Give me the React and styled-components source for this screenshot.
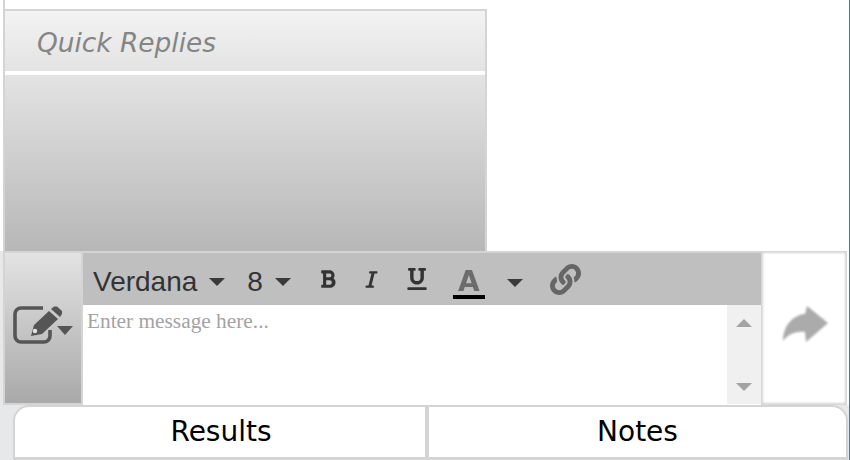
import React from "react";
import styled, { createGlobalStyle } from "styled-components";
import { FaBold, FaItalic, FaLink, FaUnderline } from "react-icons/fa";

const Global = createGlobalStyle`
    html, body {
        margin: 0;
        padding: 0;
        background: #ffffff;
    }
    body {
        font-family: "DejaVu Sans", sans-serif;
    }
`;

const Page = styled.div`
    width: 850px;
    height: 460px;
    overflow: hidden;
    display: flex;
    flex-direction: column;
    box-sizing: border-box;
    background: #ffffff;
    border-right: 1px solid #2f7fc1;
`;

const Top = styled.div`
    height: 251px;
    box-sizing: border-box;
    margin-left: 3px;
    border-left: 2px solid #d4d4d4;
    padding-top: 9px;
`;

const Replies = styled.div`
    width: 482px;
    height: 242px;
    box-sizing: border-box;
    border: 2px solid #d4d4d4;
    border-width: 2px 2px 0 0;
    display: flex;
    flex-direction: column;
`;

const RepliesHeader = styled.div`
    height: 60px;
    box-sizing: border-box;
    padding: 2px 0 0 32px;
    display: flex;
    align-items: center;
    background: linear-gradient(#f3f3f3, #e3e3e3);
    color: #858585;
    font-size: 26.4px;
    font-style: italic;
`;

const RepliesBody = styled.div`
    flex: 1;
    border-top: 4px solid #ffffff;
    background: linear-gradient(#e3e3e3, #b7b7b7);
`;

const Composer = styled.div`
    height: 154px;
    box-sizing: border-box;
    margin-right: 2px;
    border-left: 3px solid #e7e8e9;
    padding: 2px 2px 0;
    display: flex;
    background: #d4d4d4;
`;

const ModeButton = styled.div`
    width: 76px;
    height: 150px;
    box-sizing: border-box;
    margin-right: 2px;
    background: linear-gradient(#e3e3e3, #a9a9a9);
    display: flex;
    align-items: flex-start;
    padding: 53px 0 0 8px;
    color: #555555;
`;

const ModeCaret = styled.span`
    flex: none;
    margin: 20px 0 0 -6px;
    border-left: 8px solid transparent;
    border-right: 8px solid transparent;
    border-top: 9px solid #555555;
    filter: blur(0.4px);
`;

const Caret = styled.span`
    flex: none;
    margin-top: ${props => props.offset || 0}px;
    border-left: 8px solid transparent;
    border-right: 8px solid transparent;
    border-top: 8px solid #3a3a3a;
`;

const Editor = styled.div`
    width: 678px;
    display: flex;
    flex-direction: column;
`;

const Toolbar = styled.div`
    height: 52px;
    background: #bfbfbf;
    display: flex;
    align-items: center;
    padding-left: 10px;
    color: #333333;
    font-family: "Liberation Sans", sans-serif;
    font-size: 28px;
`;

const Picker = styled.div`
    display: flex;
    align-items: center;
    gap: 12px;
    margin-right: ${props => props.gap}px;
    padding-top: 5px;
`;

const Format = styled.span`
    width: 32px;
    display: flex;
    justify-content: center;
    margin-right: ${props => props.gap}px;
    color: #333333;
    filter: blur(0.5px);
`;

const ColorSwatch = styled.div`
    align-self: flex-end;
    width: 32px;
    height: 28px;
    box-sizing: border-box;
    margin: 0 22px 6px 0;
    border-bottom: 4px solid #000000;
    text-align: center;
    color: #6c6c6c;
    font-family: "DejaVu Sans", sans-serif;
    font-size: 28px;
    font-weight: 700;
    line-height: 22px;
`;

const ColorLetter = styled.span`
    filter: blur(0.5px);
`;

const LinkIcon = styled.span`
    display: flex;
    margin-left: 27px;
    color: #666666;
    filter: blur(0.5px);
`;

const MessageArea = styled.div`
    flex: 1;
    display: flex;
    background: #ffffff;
`;

const Message = styled.div`
    flex: 1;
    padding: 4px 4px;
    color: #a3a3a3;
    font-family: "Liberation Serif", serif;
    font-size: 21.33px;
    line-height: 24px;
`;

const Scrollbar = styled.div`
    width: 34px;
    margin-bottom: 1px;
    box-sizing: border-box;
    background: #f0f0f0;
    display: flex;
    flex-direction: column;
    align-items: center;
    justify-content: space-between;
    padding: 14px 0 13px;
`;

const ArrowUp = styled.span`
    border-left: 8px solid transparent;
    border-right: 8px solid transparent;
    border-bottom: 8px solid #a3a3a3;
`;

const ArrowDown = styled.span`
    border-left: 8px solid transparent;
    border-right: 8px solid transparent;
    border-top: 8px solid #a3a3a3;
`;

const SendButton = styled.div`
    width: 82px;
    height: 150px;
    margin-left: 2px;
    box-sizing: border-box;
    padding: 0 0 8px 4px;
    background: #ffffff;
    display: flex;
    align-items: center;
    justify-content: center;
    color: #ababab;
    filter: blur(0.9px);
`;

const Tabs = styled.div`
    height: 55px;
    box-sizing: border-box;
    background: #e7e8e9;
    padding-left: 13px;
    display: flex;
    align-items: flex-start;
`;

const Tab = styled.div`
    width: ${props => props.first ? "414px" : "421px"};
    height: 55px;
    box-sizing: border-box;
    background: #ffffff;
    border: 2px solid #d4d4d4;
    border-bottom-width: 3px;
    border-top-left-radius: ${props => props.first ? "16px" : "0"};
    border-top-right-radius: ${props => props.first ? "0" : "16px"};
    padding: 0 0 2px ${props => props.first ? "2px" : "0"};
    display: flex;
    align-items: center;
    justify-content: center;
    color: #000000;
    font-size: 28px;
`;

const PencilBox = () => (
    <svg width="50" height="38" viewBox="0 0 50 38" style={{ flex: "none", filter: "blur(0.4px)" }}>
        <path d="M30 2H8a6 6 0 0 0-6 6v22a6 6 0 0 0 6 6h23a6 6 0 0 0 6-6V24" fill="none" stroke="currentColor" strokeWidth="3.6" />
        <path d="M18 30l3-11L36 5l9 8-16 15z" fill="currentColor" />
        <path d="M38 3l3-2.5h3l5 4.500v3l-2 3z" fill="currentColor" />
        <circle cx="22" cy="25" r="2.2" fill="#e4e4e4" />
    </svg>
);

const SendArrow = () => (
    <svg width="46" height="36" viewBox="0 0 46 36">
        <path d="M24 0L45 17 23 36 22 26C14 25 5 28 0 35 0 21 9 9 22 8z" fill="currentColor" />
    </svg>
);

export default function App() {
    return (
        <Page>
            <Global />
            <Top>
                <Replies>
                    <RepliesHeader>Quick Replies</RepliesHeader>
                    <RepliesBody />
                </Replies>
            </Top>
            <Composer>
                <ModeButton>
                    <PencilBox />
                    <ModeCaret />
                </ModeButton>
                <Editor>
                    <Toolbar>
                        <Picker gap={22}>Verdana <Caret /></Picker>
                        <Picker gap={21}>8 <Caret /></Picker>
                        <Format gap={12}><FaBold size={20} /></Format>
                        <Format gap={13}><FaItalic size={19} /></Format>
                        <Format gap={20}><FaUnderline size={22} /></Format>
                        <ColorSwatch><ColorLetter>A</ColorLetter></ColorSwatch>
                        <Caret offset={7} />
                        <LinkIcon><FaLink size={31} /></LinkIcon>
                    </Toolbar>
                    <MessageArea>
                        <Message>Enter message here...</Message>
                        <Scrollbar>
                            <ArrowUp />
                            <ArrowDown />
                        </Scrollbar>
                    </MessageArea>
                </Editor>
                <SendButton><SendArrow /></SendButton>
            </Composer>
            <Tabs>
                <Tab first>Results</Tab>
                <Tab>Notes</Tab>
            </Tabs>
        </Page>
    );
}
